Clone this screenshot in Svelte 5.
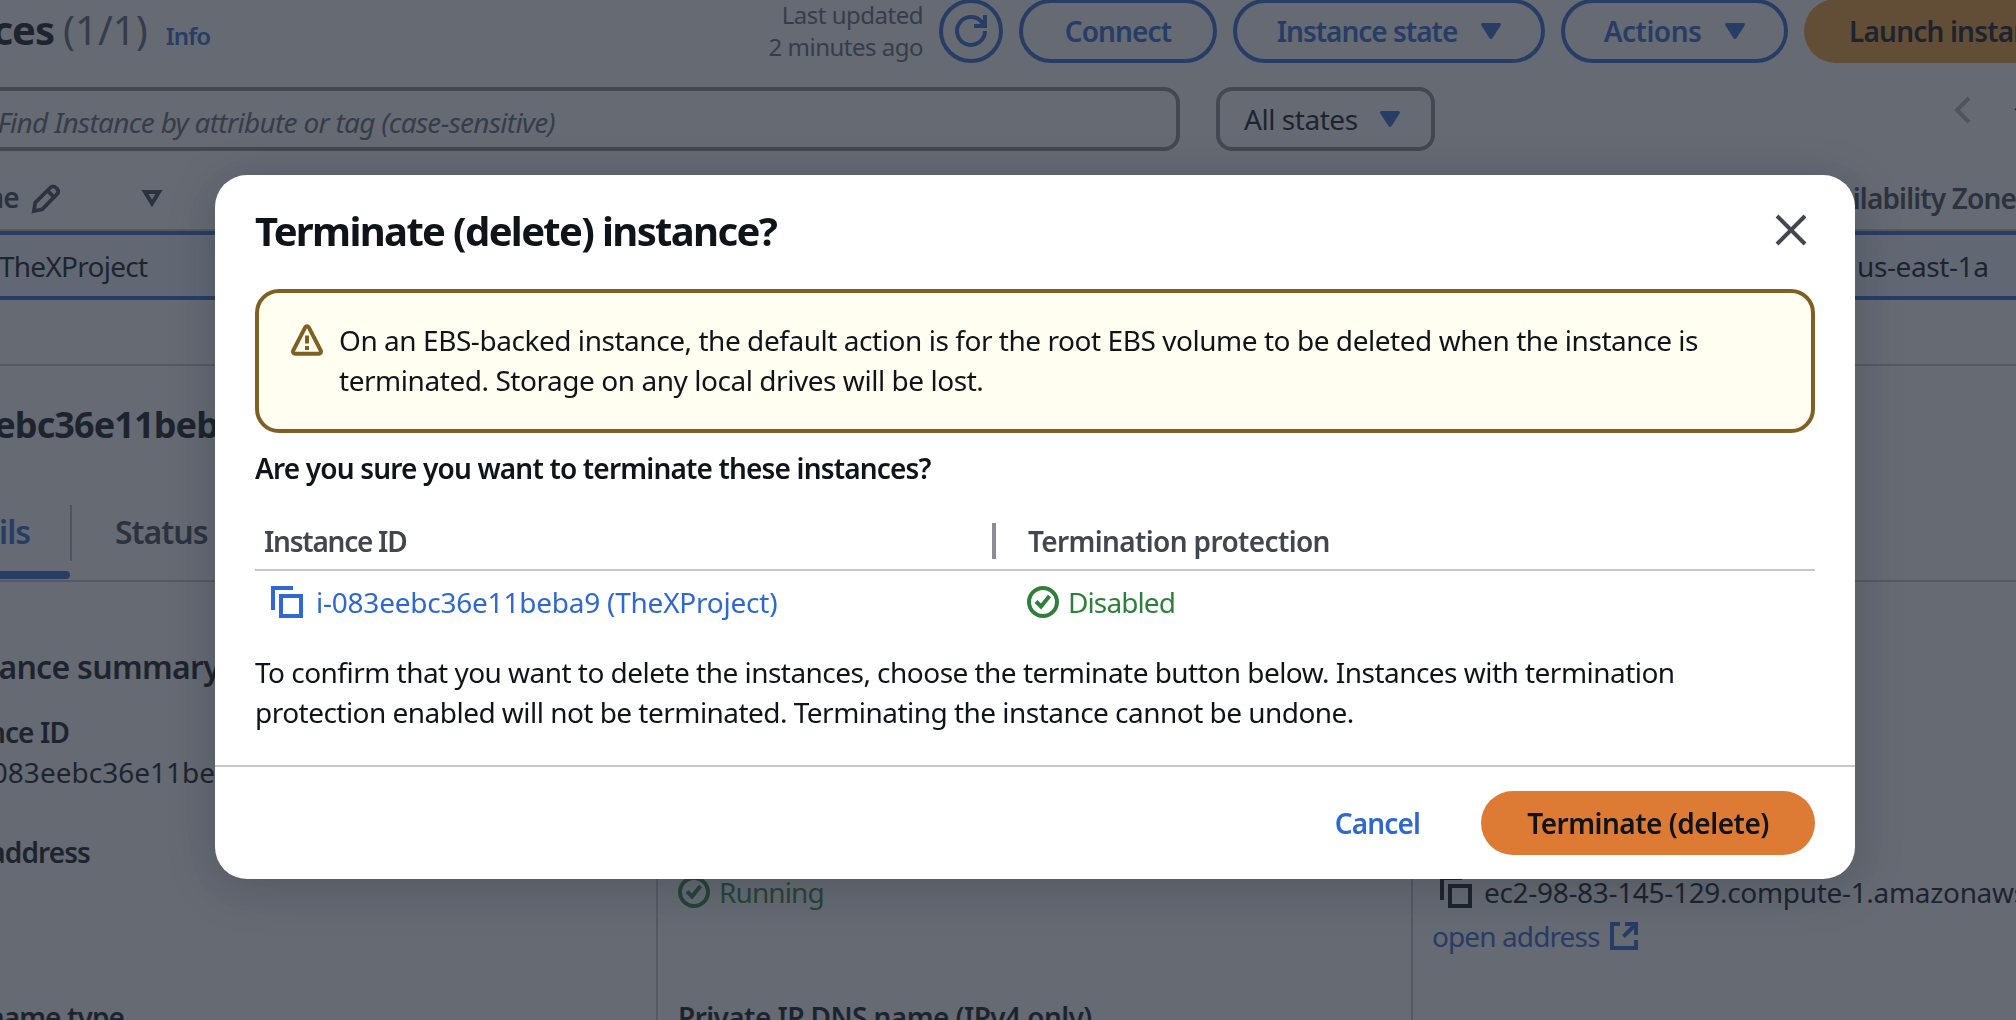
<script>
  const pageButtons = [
    { label: 'Connect', cls: 'connect', caret: false },
    { label: 'Instance state', cls: 'state', caret: true },
    { label: 'Actions', cls: 'actions', caret: true }
  ];
</script>

{#snippet caret()}
  <svg class="caret" viewBox="0 0 20 16"><path d="M1.6 0h16.8c1.3 0 2 1.4 1.2 2.4l-8.2 12.8c-.7 1-2.100 1-2.800 0L.4 2.400C-.4 1.400.3 0 1.600 0z" /></svg>
{/snippet}

{#snippet copyIcon()}
  <svg class="icon" viewBox="0 0 32 32"><path d="M2 24V2h20" /><path d="M10 10h20v20H10z" /></svg>
{/snippet}

{#snippet okIcon()}
  <svg class="icon" viewBox="0 0 32 32"><circle cx="16" cy="16" r="14" /><path d="M9 15.500l5 5L22.500 10" /></svg>
{/snippet}

<div class="page">
  <header class="toolbar">
    <div class="title">
      <h1 class="clip">Instances</h1>
      <span class="count">(1/1)</span>
      <a class="info" href="#info">Info</a>
    </div>
    <div class="updated">Last updated<br />2 minutes ago</div>
    <button class="pill round" aria-label="Refresh">
      <svg class="icon" viewBox="0 0 32 32"><path d="M30 16a14 14 0 1 1-3.500-9.300L29 10" /><path d="M30 0v11H19" /></svg>
    </button>
    {#each pageButtons as b}
      <button class="pill {b.cls}">{b.label}{#if b.caret}{@render caret()}{/if}</button>
    {/each}
    <button class="pill launch">Launch instances</button>
  </header>

  <div class="filters">
    <div class="search clip">Find Instance by attribute or tag (case-sensitive)</div>
    <div class="select">All states{@render caret()}</div>
    <div class="pager">
      <svg class="chev" viewBox="0 0 16 26"><path d="M14 1L2 13l12 12" /></svg>
      <span>1</span>
    </div>
  </div>

  <div class="thead">
    <span class="name clip">Name</span>
    <svg class="pen" viewBox="0 0 32 32"><path d="M3 29l1.500-9L21 3.500a3.500 3.500 0 0 1 5 0l2 2a3.500 3.500 0 0 1 0 5L12 27z" /><path d="M17.500 7l7 7" /></svg>
    <svg class="sort" viewBox="0 0 20 17"><path d="M3 2h14l-7 11.500z" /></svg>
    <span class="zone">Availability Zone</span>
  </div>
  <div class="trow">
    <span class="tname">TheXProject</span>
    <span class="tzone">us-east-1a</span>
  </div>

  <section class="panel">
    <h2 class="clip">i-083eebc36e11beb</h2>
    <nav class="tabs">
      <span class="tab on clip">Details</span>
      <span class="tab">Status</span>
    </nav>
    <h3 class="clip">Instance summary</h3>
    <div class="cols">
      <div class="col first">
        <div class="cell short"><b class="clip id">Instance ID</b><span class="clip value">i-083eebc36e11be</span></div>
        <div class="cell tall"><b class="clip addr">IPv6 address</b></div>
        <div class="cell"><b class="clip host">Hostname type</b></div>
      </div>
      <div class="col second">
        <div class="cell short"></div>
        <div class="cell tall pushed"><span class="ok">{@render okIcon()}Running</span></div>
        <div class="cell"><b class="dns">Private IP DNS name (IPv4 only)</b></div>
      </div>
      <div class="col third">
        <div class="cell short"></div>
        <div class="cell tall pushed">
          <span class="host-name">{@render copyIcon()}ec2-98-83-145-129.compute-1.amazonaws.com</span>
          <a class="open" href="#open">open address
            <svg class="ext" viewBox="0 0 28 28"><path d="M10 2H2v24h24v-8" /><path d="M15 2h11v11M26 2L13.500 14.500" /></svg>
          </a>
        </div>
      </div>
    </div>
  </section>
</div>

<div class="overlay">
  <div class="modal" role="dialog" aria-modal="true">
    <div class="modal-head">
      <h2>Terminate (delete) instance?</h2>
      <svg class="close" viewBox="0 0 32 32"><path d="M2 2l28 28M30 2L2 30" /></svg>
    </div>
    <div class="alert">
      <svg class="warn" viewBox="0 0 32 32">
        <path d="M14.300 3.200a2 2 0 0 1 3.400 0l12 23.300a2 2 0 0 1-1.700 3.200H4a2 2 0 0 1-1.700-3.200z" />
        <path d="M16 11.500v8M16 22v4" />
      </svg>
      <p>On an EBS-backed instance, the default action is for the root EBS volume to be deleted when the instance is<br /><span class="l2">terminated. Storage on any local drives will be lost.</span></p>
    </div>
    <p class="ask">Are you sure you want to terminate these instances?</p>
    <div class="tbl-head">
      <span class="c1">Instance ID</span>
      <span class="c2">Termination protection</span>
    </div>
    <div class="tbl-row">
      <a class="c1" href="#instance">{@render copyIcon()}i-083eebc36e11beba9 (TheXProject)</a>
      <span class="c2 ok">{@render okIcon()}Disabled</span>
    </div>
    <p class="confirm">To confirm that you want to delete the instances, choose the terminate button below. Instances with termination<br /><span class="l2">protection enabled will not be terminated. Terminating the instance cannot be undone.</span></p>
    <footer>
      <button class="cancel">Cancel</button>
      <button class="terminate">Terminate (delete)</button>
    </footer>
  </div>
</div>

<style>
  :global(body) { overflow: hidden; background: #fff; }
  .page, .overlay {
    box-sizing: border-box;
    width: 2016px;
    height: 1020px;
    overflow: hidden;
    font-family: "Noto Sans", "Open Sans", sans-serif;
    font-size: 28px;
    font-weight: 430;
    line-height: 40px;
    letter-spacing: -0.45px;
    color: #0f141a;
    white-space: nowrap;
  }
  h1, h2, h3, p { margin: 0; }
  a { color: #2f68d0; text-decoration: none; }
  b { font-weight: 650; }
  button { font: inherit; letter-spacing: inherit; padding: 0; border: 0; background: none; box-sizing: border-box; white-space: nowrap; }
  svg { fill: none; stroke: currentColor; stroke-width: 4; flex: none; overflow: visible; }
  .icon { width: 32px; height: 32px; }
  .clip { display: flex; justify-content: flex-end; overflow: hidden; }
  .caret { width: 20px; height: 16px; fill: #2f68d0; stroke: none; }

  .toolbar { display: flex; height: 64px; margin-top: -1px; align-items: center; gap: 16px; }
  .title { display: flex; align-items: baseline; width: 700px; margin-right: auto; }
  .title h1 { width: 54px; font-size: 40px; line-height: 48px; font-weight: 680; letter-spacing: -1px; }
  .count { margin-left: 9px; font-size: 40px; line-height: 48px; color: #656871; letter-spacing: 0; }
  .info { margin-left: 18px; font-size: 24px; font-weight: 650; letter-spacing: -0.8px; }
  .updated { font-size: 24px; line-height: 32px; text-align: right; color: #656871; letter-spacing: -0.5px; }
  .pill { display: flex; align-items: center; justify-content: center; height: 64px; border: 4px solid #2f68d0; border-radius: 32px; color: #2f68d0; font-weight: 650; }
  .round { width: 64px; }
  .connect { width: 198px; letter-spacing: -0.85px; }
  .state { width: 312px; gap: 24px; letter-spacing: -1px; }
  .actions { width: 227px; gap: 24px; letter-spacing: -0.5px; }
  .launch { width: 212px; border-color: #f5a032; background: #f5a032; color: #0f141a; border-radius: 32px 0 0 32px; border-right: 0; justify-content: flex-start; padding-left: 41px; overflow: hidden; letter-spacing: -0.8px; }

  .filters { display: flex; height: 64px; margin-top: 24px; }
  .search { box-sizing: border-box; width: 1180px; border: 4px solid #8c8c94; border-left: 0; border-radius: 0 16px 16px 0; padding: 11px 621px 0 0; font-style: italic; color: #656871; letter-spacing: -0.7px; }
  .select { box-sizing: border-box; display: flex; align-items: center; gap: 22px; width: 219px; margin-left: 36px; padding-left: 24px; border: 4px solid #8c8c94; border-radius: 16px; }
  .pager { display: flex; margin-left: auto; width: 61px; gap: 41px; padding-top: 10px; height: 40px; }
  .chev { width: 16px; height: 26px; color: #b4b4bb; }
  .pager span { line-height: 34px; }

  .thead { display: flex; height: 78px; border-bottom: 2px solid #c6c6cd; font-weight: 650; color: #424650; padding-top: 0; align-items: center; letter-spacing: -0.9px; }
  .name { width: 71px; padding-top: 14px; }
  .pen { width: 30px; height: 30px; margin: 17px 0 0 12px; }
  .sort { width: 20px; height: 17px; margin: 17px 0 0 81px; }
  .zone { margin: 16px 0 0 1643px; }
  .thead .zone { letter-spacing: -0.85px; }
  .trow { display: flex; box-sizing: border-box; height: 69px; background: #f0f8ff; border: solid #2f68d0; border-width: 4px 0; padding-top: 11px; justify-content: space-between; letter-spacing: -0.75px; }
  .tname { margin-left: -1px; }
  .tzone { width: 159px; letter-spacing: -0.4px; }

  .panel { margin-top: 64px; border-top: 2px solid #c6c6cd; }
  .panel h2 { width: 218px; margin-top: 37px; font-size: 36px; line-height: 44px; font-weight: 680; letter-spacing: -0.9px; }
  .tabs { display: flex; align-items: flex-start; height: 75px; margin-top: 58px; border-bottom: 2px solid #c6c6cd; font-size: 32px; font-weight: 650; color: #424650; letter-spacing: -1px; }
  .tab { padding: 7px 0 0 43px; }
  .tab.on { position: relative; box-sizing: border-box; width: 72px; height: 56px; padding: 7px 40px 0 0; color: #2f68d0; border-right: 2px solid #b4b4bb; overflow: visible; }
  .tab.on::after { content: ""; position: absolute; left: -60px; top: 66px; width: 130px; height: 8px; border-radius: 4px; background: #2f68d0; }
  .panel h3 { width: 220px; margin-top: 65px; font-size: 32px; line-height: 40px; font-weight: 650; letter-spacing: -0.7px; }
  .cols { display: grid; grid-template-columns: 656px 755px 605px; margin-top: 25px; height: 310px; }
  .col + .col { border-left: 2px solid #c6c6cd; }
  .cell { display: flex; flex-direction: column; align-items: flex-start; }
  .short { height: 120px; }
  .tall { height: 165px; }
  .tall.pushed { box-sizing: border-box; padding-top: 40px; }
  .cell b { letter-spacing: -0.9px; }
  .id { width: 69px; }
  .value { width: 215px; letter-spacing: 0; }
  .addr { width: 90px; }
  .host { width: 124px; }
  .second { padding-left: 20px; }
  .third { padding-left: 19px; }
  .cell .dns { letter-spacing: -0.58px; }
  .ok { display: flex; align-items: center; gap: 9px; color: #2f7f3c; letter-spacing: -0.9px; }
  .host-name { display: flex; align-items: center; gap: 12px; margin-left: 8px; letter-spacing: -0.32px; }
  .open { display: flex; align-items: center; gap: 10px; margin-top: 4px; letter-spacing: -0.9px; }
  .ext { width: 28px; height: 28px; }

  .overlay { position: fixed; inset: 0; background: rgba(35, 43, 55, 0.7); padding: 175px 0 0 215px; }
  .modal { box-sizing: border-box; width: 1640px; height: 704px; padding: 32px 40px 0; background: #fff; border-radius: 32px; box-shadow: 0 8px 48px 2px rgba(15, 20, 26, 0.2); }
  .modal-head { display: flex; justify-content: space-between; height: 82px; }
  .modal-head h2 { font-size: 40px; line-height: 48px; font-weight: 680; letter-spacing: -1.65px; }
  .close { width: 32px; height: 32px; margin: 7px 8px 0 0; color: #424650; }
  .alert { display: flex; box-sizing: border-box; height: 144px; padding: 27px 32px; border: 4px solid #7f5f22; border-radius: 24px; background: #fffef0; gap: 16px; }
  .warn { width: 32px; height: 32px; margin-top: 4px; color: #7f5f22; }
  .alert p { letter-spacing: -0.45px; }
  .ask { margin-top: 15px; font-weight: 650; letter-spacing: -0.83px; }
  .tbl-head { display: flex; align-items: flex-end; height: 81px; border-bottom: 2px solid #c6c6cd; font-weight: 650; color: #424650; }
  .tbl-head .c1 { box-sizing: border-box; width: 741px; height: 36px; line-height: 36px; margin-bottom: 10px; padding-left: 9px; border-right: 4px solid #8c8c94; letter-spacing: -1.25px; }
  .tbl-head .c2 { margin: 0 0 8px 32px; letter-spacing: -0.64px; }
  .tbl-row { display: flex; height: 70px; padding-top: 11px; box-sizing: border-box; }
  .tbl-row .c1 { display: flex; align-items: center; box-sizing: border-box; height: 40px; width: 772px; padding-left: 16px; gap: 13px; letter-spacing: -0.23px; }
  .tbl-row .c2 { height: 40px; }
  .confirm { margin-top: 11px; letter-spacing: -0.53px; }
  footer { display: flex; justify-content: flex-end; align-items: center; gap: 61px; height: 112px; margin: 33px -40px 0; padding-right: 40px; border-top: 2px solid #c6c6cd; font-weight: 650; }
  .cancel { color: #2f68d0; letter-spacing: -0.85px; }
  .terminate { width: 334px; height: 64px; border-radius: 32px; background: #dd7a34; color: #0f141a; letter-spacing: -0.5px; }
</style>
